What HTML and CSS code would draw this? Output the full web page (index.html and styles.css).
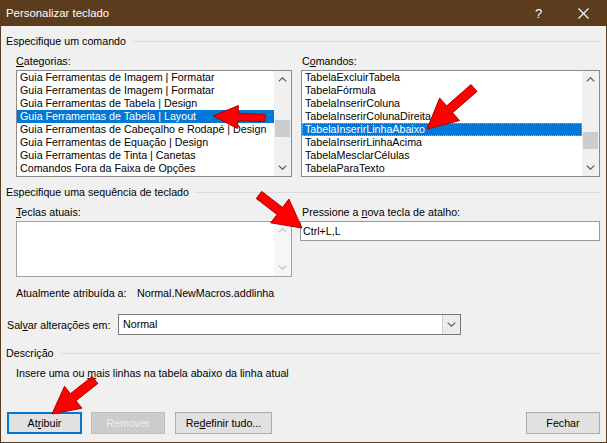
FILE: index.html
```html
<!DOCTYPE html>
<html lang="pt">
<head>
<meta charset="utf-8">
<title>Personalizar teclado</title>
<link rel="stylesheet" href="styles.css">
</head>
<body>
<div class="window">
  <div class="titlebar">
    <span class="title">Personalizar teclado</span>
    <span class="tbtn help">?</span>
    <span class="tbtn close"><svg width="11" height="11" viewBox="0 0 11 11"><path d="M0.5 0.5 L10.5 10.5 M10.5 0.5 L0.5 10.5" stroke="#fff" stroke-width="1.1" fill="none"/></svg></span>
  </div>
  <div class="client">
    <div class="group-head"><span>Especifique um comando</span></div>
    <div class="cols">
      <div class="col col-left">
        <div class="lbl"><u>C</u>ategorias:</div>
        <div class="listbox tall">
          <ul class="items">
            <li>Guia Ferramentas de Imagem | Formatar</li>
            <li>Guia Ferramentas de Imagem | Formatar</li>
            <li>Guia Ferramentas de Tabela | Design</li>
            <li class="sel">Guia Ferramentas de Tabela | Layout</li>
            <li>Guia Ferramentas de Cabeçalho e Rodapé | Design</li>
            <li>Guia Ferramentas de Equação | Design</li>
            <li>Guia Ferramentas de Tinta | Canetas</li>
            <li>Comandos Fora da Faixa de Opções</li>
          </ul>
          <div class="vscroll">
            <div class="sbtn"><svg width="9" height="5" viewBox="0 0 9 5"><path d="M0.7 4.4 L4.5 0.8 L8.3 4.4" stroke="#606060" stroke-width="1.3" fill="none"/></svg></div>
            <div class="track"><div class="thumb thumb-left"></div></div>
            <div class="sbtn"><svg width="9" height="5" viewBox="0 0 9 5"><path d="M0.7 0.6 L4.5 4.2 L8.3 0.6" stroke="#606060" stroke-width="1.3" fill="none"/></svg></div>
          </div>
        </div>
      </div>
      <div class="col col-right">
        <div class="lbl">C<u>o</u>mandos:</div>
        <div class="listbox tall">
          <ul class="items">
            <li>TabelaExcluirTabela</li>
            <li>TabelaFórmula</li>
            <li>TabelaInserirColuna</li>
            <li>TabelaInserirColunaDireita</li>
            <li class="sel focus">TabelaInserirLinhaAbaixo</li>
            <li>TabelaInserirLinhaAcima</li>
            <li>TabelaMesclarCélulas</li>
            <li>TabelaParaTexto</li>
          </ul>
          <div class="vscroll">
            <div class="sbtn"><svg width="9" height="5" viewBox="0 0 9 5"><path d="M0.7 4.4 L4.5 0.8 L8.3 4.4" stroke="#606060" stroke-width="1.3" fill="none"/></svg></div>
            <div class="track"><div class="thumb thumb-right"></div></div>
            <div class="sbtn"><svg width="9" height="5" viewBox="0 0 9 5"><path d="M0.7 0.6 L4.5 4.2 L8.3 0.6" stroke="#606060" stroke-width="1.3" fill="none"/></svg></div>
          </div>
        </div>
      </div>
    </div>

    <div class="group-head gh2"><span>Especifique uma sequência de teclado</span></div>
    <div class="cols cols2">
      <div class="col col-left">
        <div class="lbl"><u>T</u>eclas atuais:</div>
        <div class="listbox short">
          <ul class="items"></ul>
          <div class="vscroll">
            <div class="sbtn"><svg width="9" height="5" viewBox="0 0 9 5"><path d="M0.7 4.4 L4.5 0.8 L8.3 4.4" stroke="#c4c4c4" stroke-width="1.3" fill="none"/></svg></div>
            <div class="track"></div>
            <div class="sbtn"><svg width="9" height="5" viewBox="0 0 9 5"><path d="M0.7 0.6 L4.5 4.2 L8.3 0.6" stroke="#c4c4c4" stroke-width="1.3" fill="none"/></svg></div>
          </div>
        </div>
      </div>
      <div class="col col-right">
        <div class="lbl">Pressione a <u>n</u>ova tecla de atalho:</div>
        <div class="keyinput">Ctrl+L,L</div>
      </div>
    </div>

    <div class="assigned"><span class="k">Atualmente atribuída a:</span><span>Normal.NewMacros.addlinha</span></div>

    <div class="save-row">
      <span class="save-lbl">Sal<u>v</u>ar alterações em:</span>
      <div class="select">
        <span class="select-val">Normal</span>
        <span class="dd"><svg width="9" height="5" viewBox="0 0 9 5"><path d="M0.7 0.6 L4.5 4.2 L8.3 0.6" stroke="#606060" stroke-width="1.2" fill="none"/></svg></span>
      </div>
    </div>

    <div class="group-head gh3"><span>Descrição</span></div>
    <div class="desc">Insere uma ou <u>m</u>ais linhas na tabela abaixo da linha atual</div>

    <div class="buttons">
      <div class="btn btn-focus b-atribuir">At<u>r</u>ibuir</div>
      <div class="btn btn-disabled b-remover">Remover</div>
      <div class="btn b-redefinir">Re<u>d</u>efinir tudo...</div>
      <div class="btn b-fechar">Fechar</div>
    </div>
  </div>

  <svg class="arrows" width="607" height="443" viewBox="0 0 607 443">
    <g fill="#ff0000" stroke="#b00000" stroke-width="1" stroke-linejoin="miter">
      <polygon points="265.1,114.5 238.1,113.5 238.4,105.5 213,116 237.5,128.5 237.9,120.5 264.9,121.5"/>
      <polygon points="471.0,84.6 446.6,105.9 439.7,98.0 427,129 459.5,120.6 452.6,112.7 477.0,91.4"/>
      <polygon points="256.3,198.6 277.1,214.5 270.7,222.8 302,228 288.9,199.1 282.5,207.4 261.7,191.4"/>
      <polygon points="92.2,376.5 70.4,393.7 64.5,386.3 52,414 81.9,408.2 76.0,400.8 97.8,383.5"/>
    </g>
  </svg>
</div>
</body>
</html>
```

FILE: styles.css
```css
html, body {
  margin: 0;
  padding: 0;
  background: #f0f0f0;
}
body {
  font-family: "Liberation Sans", Arial, sans-serif;
  font-size: 10.7px;
  color: #000;
}
u {
  text-decoration: underline;
  text-underline-offset: 1px;
}
.window {
  position: relative;
  width: 607px;
  height: 443px;
  box-sizing: border-box;
  background: #5b3c1d;
  padding: 0 1px 1px 1px;
  display: flex;
  flex-direction: column;
}
.titlebar {
  height: 26px;
  flex: none;
  display: flex;
  align-items: center;
  color: #fff;
  font-size: 11.4px;
  padding-left: 5px;
}
.title {
  flex: 1;
}
.tbtn {
  width: 45px;
  height: 26px;
  display: flex;
  align-items: center;
  justify-content: center;
}
.help {
  font-size: 13px;
}
.client {
  flex: 1;
  background: #f0f0f0;
  padding: 8px 6px 8px 5px;
  display: flex;
  flex-direction: column;
}
.group-head {
  display: flex;
  align-items: center;
  line-height: 14px;
  height: 14px;
}
.group-head::after {
  content: "";
  flex: 1;
  height: 1px;
  background: #dcdcdc;
  margin-left: 6px;
}
.gh2 {
  margin-top: 8px;
}
.gh3 {
  margin-top: 11px;
}
.cols {
  display: flex;
  gap: 9px;
  margin-left: 10px;
  margin-top: 6px;
}
.col-left {
  width: 276px;
}
.col-right {
  width: 299px;
}
.lbl {
  line-height: 15px;
  height: 15px;
  margin-bottom: 1px;
  white-space: nowrap;
}
.col-right .lbl {
  padding-left: 1px;
}
.listbox {
  box-sizing: border-box;
  border: 1px solid #8a8a8a;
  background: #fff;
  display: flex;
}
.listbox.tall {
  height: 107px;
}
.listbox.short {
  height: 56px;
  border-color: #a0a0a0;
}
.items {
  flex: 1;
  margin: 0;
  padding: 0;
  list-style: none;
  overflow: hidden;
}
.items li {
  height: 13px;
  line-height: 13px;
  padding-left: 3px;
  white-space: nowrap;
  box-sizing: border-box;
}
.items li.sel {
  background: #0078d7;
  color: #fff;
}
.items li.focus {
  outline: 1px dotted #f0a030;
  outline-offset: -1px;
}
.vscroll {
  width: 17px;
  background: #f0f0f0;
  display: flex;
  flex-direction: column;
}
.short .vscroll {
  background: #f6f6f6;
}
.sbtn {
  height: 17px;
  flex: none;
  display: flex;
  align-items: center;
  justify-content: center;
}
.track {
  flex: 1;
}
.thumb {
  height: 17px;
  margin: 0 1px;
  background: #cdcdcd;
}
.thumb-left {
  margin-top: 32px;
}
.thumb-right {
  margin-top: 44px;
}
.keyinput {
  box-sizing: border-box;
  height: 20px;
  margin-left: -1px;
  border: 1px solid #9a9a9a;
  background: #fff;
  padding-left: 2px;
  line-height: 18px;
}
.assigned {
  display: flex;
  margin-top: 9px;
  margin-left: 10px;
  line-height: 14px;
}
.assigned .k {
  width: 121px;
}
.save-row {
  display: flex;
  align-items: center;
  margin-top: 14px;
  height: 21px;
}
.save-lbl {
  width: 112px;
  padding-left: 1px;
  box-sizing: border-box;
}
.select {
  box-sizing: border-box;
  width: 343px;
  height: 21px;
  border: 1px solid #7a7a7a;
  background: #fff;
  display: flex;
  align-items: stretch;
}
.select-val {
  flex: 1;
  padding-left: 4px;
  line-height: 19px;
}
.dd {
  width: 17px;
  border-left: 1px solid #cfcfcf;
  background: #ececec;
  display: flex;
  align-items: center;
  justify-content: center;
}
.desc {
  margin-top: 6px;
  margin-left: 10px;
  line-height: 14px;
}
.buttons {
  margin-top: auto;
  display: flex;
  padding-left: 1px;
}
.btn {
  box-sizing: border-box;
  height: 22px;
  border: 1px solid #adadad;
  background: #e1e1e1;
  display: flex;
  align-items: center;
  justify-content: center;
  white-space: nowrap;
}
.btn-focus {
  border: 2px solid #0078d7;
}
.btn-disabled {
  background: #cccccc;
  border-color: #bfbfbf;
  color: #ededed;
}
.b-atribuir {
  width: 75px;
}
.b-remover {
  width: 74px;
  margin-left: 9px;
}
.b-redefinir {
  width: 97px;
  margin-left: 10px;
}
.b-fechar {
  width: 74px;
  margin-left: auto;
}
.arrows {
  position: absolute;
  left: 0;
  top: 0;
  pointer-events: none;
}
```
